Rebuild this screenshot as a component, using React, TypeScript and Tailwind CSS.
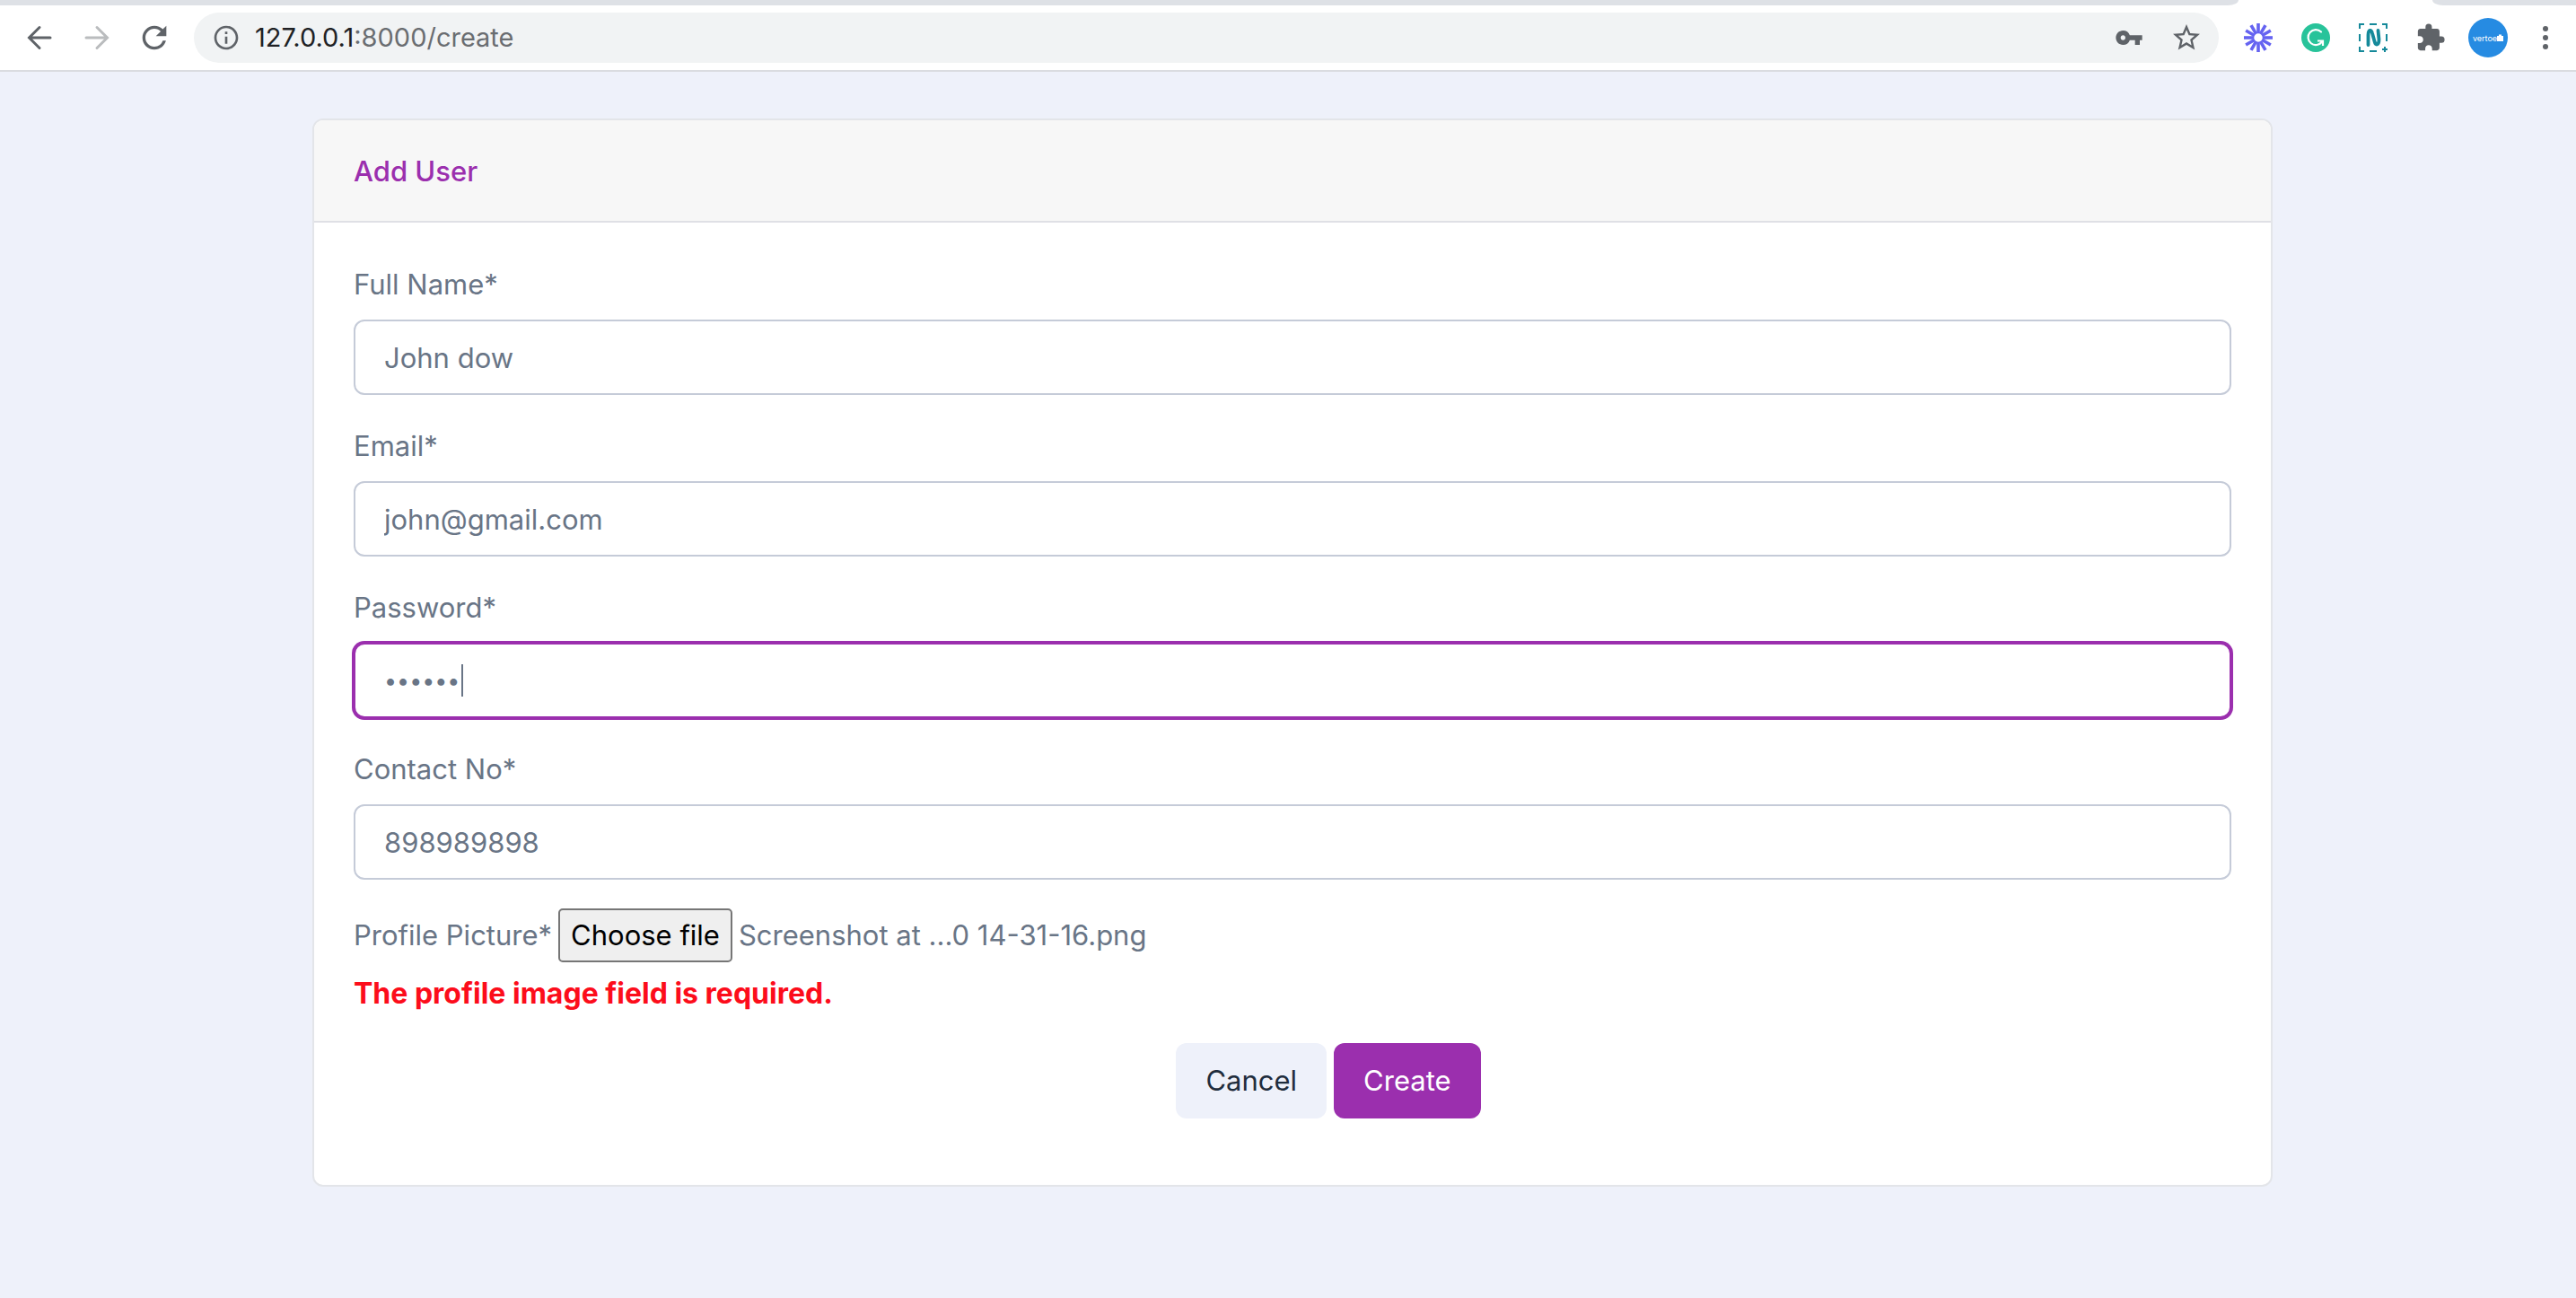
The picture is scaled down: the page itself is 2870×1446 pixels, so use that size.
import { useState, type ReactNode } from "react";
import { MdExtension, MdInfoOutline, MdRefresh, MdStarBorder, MdVpnKey } from "react-icons/md";

const RAYS = [0, 30, 60, 90, 120, 150, 180, 210, 240, 270, 300, 330];

function ToolButton({ label, className, children }: { label: string; className: string; children: ReactNode }) {
  return (
    <button type="button" aria-label={label} className={`flex shrink-0 items-center justify-center text-[#5f6368] ${className}`}>
      {children}
    </button>
  );
}

function TabStrip() {
  return (
    <div className="flex h-[6px] bg-white">
      <div className="grow rounded-br-[12px_6px] bg-[#dee1e6]" />
      <div className="w-[216px] shrink-0" />
      <div className="w-[160px] shrink-0 rounded-bl-[12px_6px] bg-[#dee1e6]" />
    </div>
  );
}

function Toolbar() {
  return (
    <nav className="flex h-[74px] items-center border-b-2 border-[#dadce0] bg-white pl-[12px] pr-[2px]">
      <ToolButton label="Back" className="size-[64px]">
        <svg width="40" height="40" viewBox="0 0 40 40" fill="none" stroke="#5f6368" strokeWidth="3">
          <path d="M32 20H9M20 8.500L8.500 20L20 31.500" strokeLinecap="round" />
        </svg>
      </ToolButton>
      <ToolButton label="Forward" className="size-[64px]">
        <svg width="40" height="40" viewBox="0 0 40 40" fill="none" stroke="#babcbe" strokeWidth="3">
          <path d="M8 20H31M20 8.500L31.500 20L20 31.500" strokeLinecap="round" />
        </svg>
      </ToolButton>
      <ToolButton label="Reload" className="size-[64px]">
        <MdRefresh size={40} />
      </ToolButton>
      <div className="ml-[12px] flex h-[56px] grow items-center rounded-full bg-[#f1f3f4] pl-[20px] pr-[4px]">
        <MdInfoOutline size={32} className="shrink-0 text-[#5f6368]" />
        <p className="grow pl-[16px] font-['Inter',sans-serif] text-[29px] leading-[36px] text-[#6a6d71]">
          <span className="text-[#202124]">127.0.0.1</span>:8000/create
        </p>
        <ToolButton label="Saved passwords" className="size-[64px]">
          <MdVpnKey size={32} />
        </ToolButton>
        <ToolButton label="Bookmark this page" className="size-[64px]">
          <MdStarBorder size={36} />
        </ToolButton>
      </div>
      <div className="ml-[12px] flex">
        <ToolButton label="Starburst extension" className="size-[64px]">
          <svg width="32" height="32" viewBox="0 0 32 32" stroke="#6563f1" strokeWidth="3.6">
            {RAYS.map((angle) => (
              <path key={angle} d="M16 0V11" transform={`rotate(${angle} 16 16)`} />
            ))}
            <circle cx="16" cy="16" r="5.500" fill="#fff" strokeWidth="1.500" />
          </svg>
        </ToolButton>
        <ToolButton label="Grammar checker" className="size-[64px]">
          <svg width="32" height="32" viewBox="0 0 32 32" fill="none">
            <circle cx="16" cy="16" r="16" fill="#28c39a" />
            <path d="M22 9.500A8.500 8.500 0 1 0 23 20.500" stroke="#fff" strokeWidth="2.200" strokeLinecap="round" />
            <path d="M18 19.500H24V25" stroke="#fff" strokeWidth="2.200" />
            <path d="M20 19H24.500V24Z" fill="#fff" />
          </svg>
        </ToolButton>
        <ToolButton label="Screen capture" className="size-[64px]">
          <svg width="32" height="32" viewBox="0 0 32 32" fill="none" stroke="#15899a" strokeWidth="2">
            <path d="M1 6V1H6M12 1H20M26 1H31V6M1 12V20M31 12V20M1 26V31H6M12 31H20M26 29H32M29 26V32" />
            <path
              d="M10.500 24V13C10.500 6.500 14 6.500 15 11L17.500 20C18.700 24.800 22.500 25 22.500 18L21.500 8"
              strokeWidth="3.800"
              strokeLinecap="round"
              strokeLinejoin="round"
            />
          </svg>
        </ToolButton>
        <ToolButton label="Extensions" className="size-[64px]">
          <MdExtension size={34} />
        </ToolButton>
        <ToolButton label="Profile" className="size-[64px]">
          <span className="flex size-[44px] items-center justify-center rounded-full bg-[#268be2] font-['Inter',sans-serif] text-[9px] leading-none text-white">
            vertoe
            <svg width="7" height="8" viewBox="0 0 7 8" fill="#fff">
              <path d="M0 2H2V0.500H5V2H7V8H0Z" />
            </svg>
          </span>
        </ToolButton>
        <ToolButton label="Browser menu" className="size-[64px]">
          <svg width="6" height="26" viewBox="0 0 6 26" fill="#5f6368">
            <circle cx="3" cy="3" r="3" />
            <circle cx="3" cy="13" r="3" />
            <circle cx="3" cy="23" r="3" />
          </svg>
        </ToolButton>
      </div>
    </nav>
  );
}

type FieldProps = { id: string; label: string; type: string; initial: string };

function Field({ id, label, type, initial }: FieldProps) {
  const [value, setValue] = useState(initial);
  return (
    <div>
      <label htmlFor={id} className="mb-[15px] block">
        {label}
      </label>
      <input
        id={id}
        type={type}
        value={value}
        onChange={(event) => setValue(event.target.value)}
        className="block h-[84px] w-full rounded-[12px] border-2 border-[#c5cbd8] bg-white px-[32px] outline-none"
      />
    </div>
  );
}

function PasswordField() {
  const [value, setValue] = useState("secret");
  return (
    <div>
      <label htmlFor="password" className="mb-[15px] block">
        Password*
      </label>
      <div className="relative">
        <input
          id="password"
          type="password"
          value={value}
          onChange={(event) => setValue(event.target.value)}
          className="block h-[84px] w-full rounded-[12px] border-2 border-[#9b2fae] bg-white px-[32px] text-[25px] caret-transparent outline-none ring-2 ring-[#9b2fae]"
        />
        <span aria-hidden="true" className="absolute left-[120px] top-[24px] h-[36px] w-[2px] bg-[#697586]" />
      </div>
    </div>
  );
}

export default function App() {
  return (
    <div className="min-h-screen bg-[#eef1fa]">
      <header>
        <TabStrip />
        <Toolbar />
      </header>
      <main className="pb-[124px] pl-[10px] pt-[52px] font-['Inter',sans-serif] text-[31px] leading-[48px] text-[#697586]">
        <section className="mx-auto max-w-[2184px] overflow-hidden rounded-[12px] border-2 border-[#e3e5e9] bg-white">
          <h1 className="border-b-2 border-[#dfe0e5] bg-[#f7f7f7] px-[44px] pb-[31px] pt-[33px] font-medium text-[#9b2fae]">
            Add User
          </h1>
          <form className="px-[44px] pb-[74px] pt-[45px]" onSubmit={(event) => event.preventDefault()}>
            <div className="flex flex-col gap-[33px]">
              <Field id="name" label="Full Name*" type="text" initial="John dow" />
              <Field id="email" label="Email*" type="email" initial="john@gmail.com" />
              <PasswordField />
              <Field id="contact" label="Contact No*" type="text" initial="898989898" />
            </div>
            <div className="mt-[32px] flex items-center gap-[7px]">
              <label htmlFor="picture">Profile Picture*</label>
              <label className="flex h-[60px] items-center rounded-[5px] border-2 border-[#767676] bg-[#efefef] px-[12px] text-black">
                Choose file
                <input id="picture" type="file" className="sr-only" />
              </label>
              <span>Screenshot at ...0 14-31-16.png</span>
            </div>
            <p role="alert" className="mt-[11px] text-[32px] font-bold text-[#fc0d1b]">
              The profile image field is required.
            </p>
            <div className="mt-[31px] flex justify-center gap-[8px] pl-[80px]">
              <button type="button" className="h-[84px] rounded-[12px] bg-[#eef1fa] px-[33px] text-[#1f2d3d]">
                Cancel
              </button>
              <button type="submit" className="h-[84px] rounded-[12px] bg-[#9b2fae] px-[33px] text-white">
                Create
              </button>
            </div>
          </form>
        </section>
      </main>
    </div>
  );
}
